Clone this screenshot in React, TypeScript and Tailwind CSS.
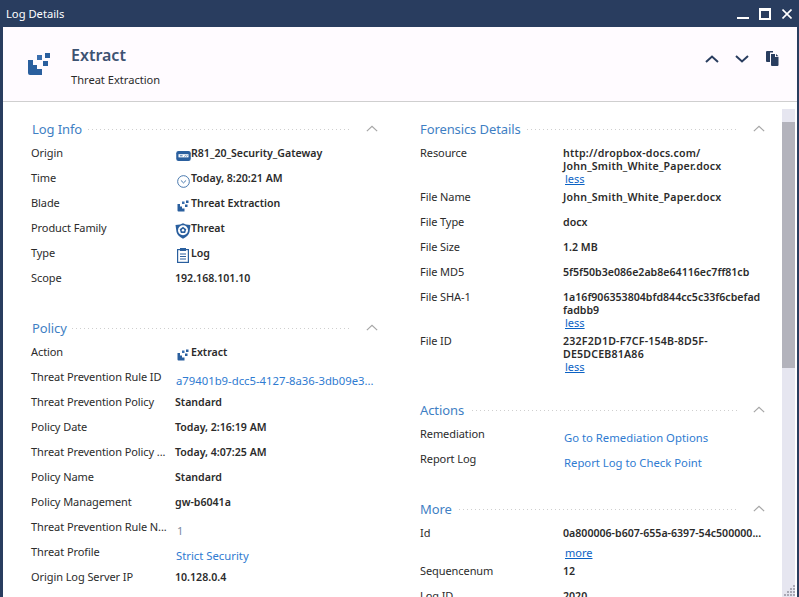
import React from 'react';

const ExtractIcon = ({ className }: { className: string }) => (
  <svg viewBox="0 0 24 24" className={className}>
    <path d="M1 8 H6 V13 H10 V17 H15 V23 H3 Q1 23 1 21 Z" fill="#2a5f9e" />
    <rect x="10" y="3" width="5" height="5" fill="#3b6fae" />
    <rect x="18" y="1" width="5" height="5" fill="#2a5f9e" />
    <rect x="16" y="9" width="5" height="5" fill="#2a5f9e" />
  </svg>
);

const Chevron = ({ className, color, width = 1.4 }: { className: string; color: string; width?: number }) => (
  <svg viewBox="0 0 14 8" className={className} fill="none" stroke={color} strokeWidth={width}>
    <path d="M1 7 L7 1.5 L13 7" />
  </svg>
);

const GatewayIcon = () => (
  <svg viewBox="0 0 16 11" className="mt-[5px] h-[10px] w-[15px]">
    <rect x="0" y="0" width="16" height="11" rx="2.5" fill="#2a5f9e" />
    <rect x="2.5" y="3.5" width="11" height="3.5" fill="#ffffff" />
    <rect x="4" y="4.8" width="3" height="1" fill="#2a5f9e" />
    <path d="M9 6.3 L10.5 4.3 M11 6.3 L12.5 4.3" stroke="#2a5f9e" strokeWidth="0.7" />
  </svg>
);

const ClockIcon = () => (
  <svg viewBox="0 0 14 14" className="mt-[6px] h-[13px] w-[13px]" fill="none" stroke="#3a6ea8" strokeWidth="1">
    <circle cx="7" cy="7" r="6.3" />
    <path d="M4.2 5.8 L7 8.5 L9.8 5.8" />
  </svg>
);

const ShieldIcon = () => (
  <svg viewBox="0 0 16 16" className="mt-[6px] h-[16px] w-[16px]">
    <path d="M8 0.3 L11 1.5 L15.5 2 L14.5 9 Q13.5 13 8 15.7 Q2.5 13 1.5 9 L0.5 2 L5 1.5 Z" fill="#2a5f9e" />
    <circle cx="8" cy="7.3" r="5" fill="#ffffff" />
    <path d="M8 3.8 L11.3 6.2 L10.1 10 H5.9 L4.7 6.2 Z" fill="#2a5f9e" />
    <circle cx="8" cy="7.2" r="1.2" fill="#ffffff" />
  </svg>
);

const LogIcon = () => (
  <svg viewBox="0 0 12 15" className="mt-[5px] h-[15px] w-[12px]" fill="none">
    <rect x="0.6" y="1.6" width="10.8" height="12.8" stroke="#2a5f9e" strokeWidth="1.2" />
    <rect x="3" y="0" width="6" height="3" fill="#2a5f9e" />
    <path d="M3 6 H9 M3 8.5 H9 M3 11 H9" stroke="#2a5f9e" strokeWidth="1" />
  </svg>
);

const CopyIcon = () => (
  <svg viewBox="0 0 13 15" className="h-[15px] w-[13px]">
    <path d="M1 0 H7 V1.5 H4 V11 H1 Q0 11 0 10 V1 Q0 0 1 0 Z" fill="#293d5f" />
    <path d="M5 3 H9 V6 H12.5 V14 Q12.5 15 11.5 15 H6 Q5 15 5 14 Z" fill="#293d5f" />
    <path d="M10 3 L12.5 5.2 H10 Z" fill="#293d5f" />
  </svg>
);

const Heading = ({ title, top, left, dotsLeft, dotsRight, chevronLeft }: { title: string; top: string; left: string; dotsLeft: string; dotsRight: string; chevronLeft: string }) => (
  <>
    <div className={`absolute ${top} ${left} text-[13px] leading-[18px] tracking-[-0.1px] text-[#3f7fc4]`}>{title}</div>
    <div className={`absolute ${top} ${dotsLeft} ${dotsRight} mt-[9px] h-px bg-[repeating-linear-gradient(90deg,#cfcfcf_0,#cfcfcf_1px,transparent_1px,transparent_4px)]`} />
    <div className={`absolute ${top} ${chevronLeft} mt-[5px]`}>
      <Chevron className="h-[7px] w-[12px]" color="#a6a6a6" />
    </div>
  </>
);

const Row = ({ y, x, label, children }: { y: number; x: 'l' | 'r'; label: string; children?: React.ReactNode }) => (
  <div
    className={`absolute flex h-[12px] items-center text-[11px] leading-[12px] tracking-[-0.08px] ${x === 'l' ? 'left-[31px]' : 'left-[420px]'}`}
    style={{ top: y - 6 }}
  >
    <div className={`${x === 'l' ? 'w-[144px]' : 'w-[143px]'} shrink-0 whitespace-nowrap text-[#2b2b2b]`}>{label}</div>
    {children}
  </div>
);

const Value = ({ children, wide }: { children: React.ReactNode; wide?: boolean }) => (
  <span className={`whitespace-nowrap text-[10.6px] font-semibold text-[#2b2b2b] ${wide ? 'tracking-[0.2px]' : 'tracking-normal'}`}>{children}</span>
);

const LinkText = ({ children }: { children: React.ReactNode }) => (
  <span className="whitespace-nowrap text-[11.3px] tracking-normal text-[#2f7bd1]">{children}</span>
);

const Less = ({ y, label = 'less' }: { y: number; label?: string }) => (
  <div className="absolute left-[565px] text-[11px] leading-[12px] text-[#0b62c4] underline" style={{ top: y - 6 }}>
    {label}
  </div>
);

const IconSlot = ({ children }: { children: React.ReactNode }) => (
  <span className="flex w-[16px] shrink-0 items-center justify-center">{children}</span>
);

export default function App() {
  return (
    <div className="relative h-[597px] w-[799px] overflow-hidden bg-[#293d5f] font-['Noto_Sans','Open_Sans',sans-serif]">
      {/* title bar */}
      <div className="absolute left-[6px] top-[5px] text-[11.2px] leading-[18px] text-white">Log Details</div>
      <div className="absolute left-[737px] top-[17px] h-[2px] w-[12px] bg-white" />
      <div className="absolute left-[759px] top-[8px] h-[12px] w-[12px] border-2 border-t-[3px] border-white" />
      <svg viewBox="0 0 10 10" className="absolute left-[782px] top-[9px] h-[10px] w-[10px]" stroke="#ffffff" strokeWidth="1.6">
        <path d="M0.5 0.5 L9.5 9.5 M9.5 0.5 L0.5 9.5" />
      </svg>

      {/* window content */}
      <div className="absolute bottom-0 left-[3px] right-[2px] top-[27px] bg-white">
        <div className="absolute inset-x-0 top-0 h-[75px] border-b border-[#cfcfcf] bg-[#fffbff]" />
      </div>

      {/* header */}
      <ExtractIcon className="absolute left-[27px] top-[52px] h-[24px] w-[24px]" />
      <div className="absolute left-[71px] top-[44px] text-[16px] leading-[22px] font-semibold text-[#3d5272]">Extract</div>
      <div className="absolute left-[71px] top-[71px] text-[11.1px] leading-[18px] text-[#2b2b2b]">Threat Extraction</div>
      <Chevron className="absolute left-[705px] top-[55px] h-[8px] w-[14px]" color="#293d5f" width={2} />
      <div className="absolute left-[735px] top-[55px] h-[8px] w-[14px] rotate-180">
        <Chevron className="h-[8px] w-[14px]" color="#293d5f" width={2} />
      </div>
      <div className="absolute left-[766px] top-[51px]"><CopyIcon /></div>

      {/* scrollbar */}
      <div className="absolute bottom-0 left-[782px] top-[109px] w-[13px] bg-[#e6e6f0]">
        <div className="absolute inset-x-0 top-[13px] h-[246px] bg-[#b3b3bc]" />
      </div>
      {/* resize grip */}
      <svg viewBox="0 0 12 12" className="absolute left-[784px] top-[584px] h-[12px] w-[12px]" fill="#a9a9b5">
        <rect x="9" y="1" width="2" height="2" />
        <rect x="6" y="4" width="2" height="2" />
        <rect x="9" y="4" width="2" height="2" />
        <rect x="3" y="7" width="2" height="2" />
        <rect x="6" y="7" width="2" height="2" />
        <rect x="9" y="7" width="2" height="2" />
        <rect x="0" y="10" width="2" height="2" />
        <rect x="3" y="10" width="2" height="2" />
        <rect x="6" y="10" width="2" height="2" />
        <rect x="9" y="10" width="2" height="2" />
      </svg>

      {/* left column */}
      <Heading title="Log Info" top="top-[120px]" left="left-[32px]" dotsLeft="left-[88px]" dotsRight="right-[449px]" chevronLeft="left-[366px]" />
      <Row y={153} x="l" label="Origin"><IconSlot><GatewayIcon /></IconSlot><Value>R81_20_Security_Gateway</Value></Row>
      <Row y={178} x="l" label="Time"><IconSlot><ClockIcon /></IconSlot><Value>Today, 8:20:21 AM</Value></Row>
      <Row y={203} x="l" label="Blade"><IconSlot><ExtractIcon className="mt-[6px] h-[12px] w-[12px]" /></IconSlot><Value>Threat Extraction</Value></Row>
      <Row y={228} x="l" label="Product Family"><IconSlot><ShieldIcon /></IconSlot><Value>Threat</Value></Row>
      <Row y={253} x="l" label="Type"><IconSlot><LogIcon /></IconSlot><Value>Log</Value></Row>
      <Row y={278} x="l" label="Scope"><Value>192.168.101.10</Value></Row>

      <Heading title="Policy" top="top-[319px]" left="left-[32px]" dotsLeft="left-[72px]" dotsRight="right-[449px]" chevronLeft="left-[366px]" />
      <Row y={352} x="l" label="Action"><IconSlot><ExtractIcon className="mt-[6px] h-[12px] w-[12px]" /></IconSlot><Value>Extract</Value></Row>
      <Row y={377} x="l" label="Threat Prevention Rule ID"><span className="relative top-[4px] ml-px"><LinkText>a79401b9-dcc5-4127-8a36-3db09e3...</LinkText></span></Row>
      <Row y={402} x="l" label="Threat Prevention Policy"><Value>Standard</Value></Row>
      <Row y={427} x="l" label="Policy Date"><Value>Today, 2:16:19 AM</Value></Row>
      <Row y={452} x="l" label="Threat Prevention Policy ..."><Value>Today, 4:07:25 AM</Value></Row>
      <Row y={477} x="l" label="Policy Name"><Value>Standard</Value></Row>
      <Row y={502} x="l" label="Policy Management"><Value>gw-b6041a</Value></Row>
      <Row y={527} x="l" label="Threat Prevention Rule N..."><span className="relative top-[4px] ml-[2px] text-[11px] text-[#7a8aa0]">1</span></Row>
      <Row y={552} x="l" label="Threat Profile"><span className="relative top-[4px] ml-px"><LinkText>Strict Security</LinkText></span></Row>
      <Row y={577} x="l" label="Origin Log Server IP"><Value>10.128.0.4</Value></Row>

      {/* right column */}
      <Heading title="Forensics Details" top="top-[120px]" left="left-[420px]" dotsLeft="left-[527px]" dotsRight="right-[61px]" chevronLeft="left-[753px]" />
      <Row y={153} x="r" label="Resource"><Value wide>http://dropbox-docs.com/</Value></Row>
      <Row y={166} x="r" label=""><Value wide>John_Smith_White_Paper.docx</Value></Row>
      <Less y={179} />
      <Row y={197} x="r" label="File Name"><Value wide>John_Smith_White_Paper.docx</Value></Row>
      <Row y={222} x="r" label="File Type"><Value>docx</Value></Row>
      <Row y={247} x="r" label="File Size"><Value>1.2 MB</Value></Row>
      <Row y={272} x="r" label="File MD5"><Value>5f5f50b3e086e2ab8e64116ec7ff81cb</Value></Row>
      <Row y={297} x="r" label="File SHA-1"><Value>1a16f906353804bfd844cc5c33f6cbefad</Value></Row>
      <Row y={310} x="r" label=""><Value>fadbb9</Value></Row>
      <Less y={323} />
      <Row y={341} x="r" label="File ID"><Value wide>232F2D1D-F7CF-154B-8D5F-</Value></Row>
      <Row y={354} x="r" label=""><Value wide>DE5DCEB81A86</Value></Row>
      <Less y={367} />

      <Heading title="Actions" top="top-[401px]" left="left-[420px]" dotsLeft="left-[472px]" dotsRight="right-[61px]" chevronLeft="left-[753px]" />
      <Row y={434} x="r" label="Remediation"><span className="relative top-[4px] ml-px"><LinkText>Go to Remediation Options</LinkText></span></Row>
      <Row y={459} x="r" label="Report Log"><span className="relative top-[4px] ml-px"><LinkText>Report Log to Check Point</LinkText></span></Row>

      <Heading title="More" top="top-[500px]" left="left-[420px]" dotsLeft="left-[459px]" dotsRight="right-[61px]" chevronLeft="left-[753px]" />
      <Row y={533} x="r" label="Id"><Value>0a800006-b607-655a-6397-54c500000...</Value></Row>
      <Less y={553} label="more" />
      <Row y={571} x="r" label="Sequencenum"><Value>12</Value></Row>
      <Row y={596} x="r" label="Log ID"><Value>2020</Value></Row>
    </div>
  );
}
